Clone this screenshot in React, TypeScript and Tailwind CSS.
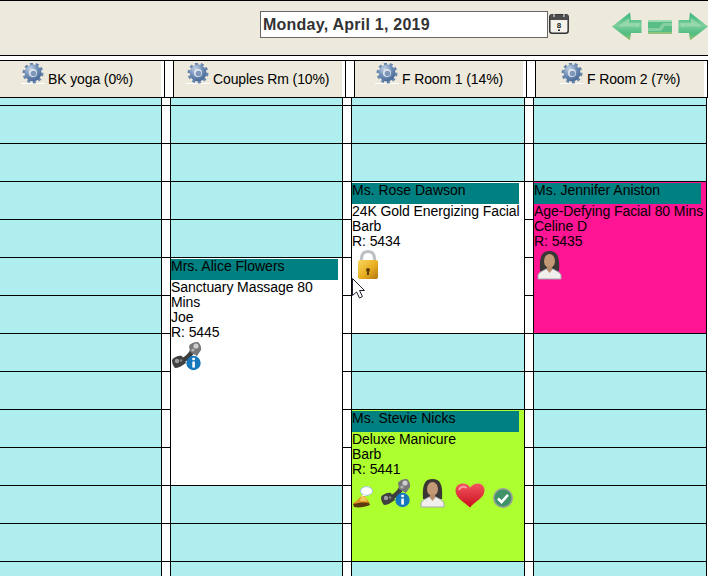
import type { ReactNode } from "react";

const font = { fontFamily: '"Liberation Sans", Arial, sans-serif' };

function Gear() {
  return (
    <svg width="24" height="21" viewBox="0 0 24 21">
      <defs>
        <radialGradient id="gearFill" cx="35%" cy="25%" r="85%">
          <stop offset="0%" stopColor="#c3d2e4" />
          <stop offset="50%" stopColor="#6f8fb8" />
          <stop offset="100%" stopColor="#3f5f8c" />
        </radialGradient>
      </defs>
      <rect x="0" y="20" width="24" height="1" fill="#ffffff" />
      <circle cx="12" cy="10" r="9" fill="none" stroke="#6a87ad" strokeWidth="3" strokeDasharray="3 2.6" />
      <circle cx="12" cy="10" r="8.4" fill="url(#gearFill)" />
      <circle cx="12" cy="10" r="4" fill="#dfe6ee" />
      <circle cx="12.5" cy="10.5" r="2.8" fill="#7f97b8" />
    </svg>
  );
}

function Calendar() {
  return (
    <svg width="20" height="20" viewBox="0 0 20 20" className="ml-[1px] mt-[13px]">
      <rect x="0.75" y="0.75" width="18.5" height="18.5" rx="2.5" fill="#f4f2ea" stroke="#333333" strokeWidth="1.5" />
      <rect x="1" y="1" width="18" height="5" fill="#4d4d4d" />
      <rect x="4" y="0" width="2" height="3" fill="#a3a3a3" />
      <rect x="14" y="0" width="2" height="3" fill="#a3a3a3" />
      <text x="10" y="14" textAnchor="middle" fontSize="8" fontWeight="700" fill="#222222" style={font}>8</text>
      <rect x="9" y="15.5" width="2" height="1.5" fill="#222222" />
    </svg>
  );
}

function Arrow({ flip = false }: { flip?: boolean }) {
  return (
    <svg width="30" height="29" viewBox="0 0 30 29" className={flip ? "-scale-x-100" : ""}>
      <defs>
        <linearGradient id="arrowFill" x1="0" y1="0" x2="0" y2="1">
          <stop offset="0%" stopColor="#35b47b" />
          <stop offset="45%" stopColor="#7ccf9b" />
          <stop offset="75%" stopColor="#52bd82" />
          <stop offset="100%" stopColor="#9cc46f" />
        </linearGradient>
      </defs>
      <path d="M0 14.5 L18 0.5 L19 8 L29.5 8 L29.5 21 L19 21 L18 28.5 Z" fill="url(#arrowFill)" />
      <path d="M6 14.5 L17 6 L17 11 L28 11 L27 15 C20 14 12 15 6 14.5 Z" fill="#a8dfb9" opacity="0.6" />
    </svg>
  );
}

function MiddleBar() {
  return (
    <svg width="24" height="14" viewBox="0 0 24 14">
      <rect width="24" height="14" fill="#58be85" />
      <rect x="0" y="0" width="24" height="2" fill="#9cdab3" />
      <path d="M0 8 L11 8 L15 3 L24 3 L24 6 L17 6 L13 11 L0 11 Z" fill="#86d0a0" />
      <rect x="0" y="12" width="24" height="2" fill="#8fc27a" />
    </svg>
  );
}

function Lock() {
  return (
    <svg width="22" height="30" viewBox="0 0 22 30" className="ml-[5px] mt-px">
      <defs>
        <linearGradient id="lockBody" x1="0" y1="0" x2="1" y2="1">
          <stop offset="0%" stopColor="#f9d85f" />
          <stop offset="55%" stopColor="#e8ad20" />
          <stop offset="100%" stopColor="#b3760f" />
        </linearGradient>
      </defs>
      <path d="M4.5 13 V9 C4.5 3.5 7 1.5 11 1.5 C15 1.5 17.5 3.5 17.5 9 V13" fill="none" stroke="#bcbfc3" strokeWidth="3" />
      <rect x="1" y="10" width="20" height="19" rx="2" fill="url(#lockBody)" />
      <circle cx="11" cy="20" r="2" fill="#5e3d08" />
      <rect x="10" y="20" width="2" height="5" fill="#5e3d08" />
    </svg>
  );
}

function PhoneInfo() {
  return (
    <svg width="31" height="31" viewBox="0 0 31 31">
      <path d="M8 22 C14 20 19 16 22 10" fill="none" stroke="#3d3d3d" strokeWidth="5" />
      <path d="M1 20 C3 17 8 15 11 16 L15 23 C11 26 7 28 4 28 C2 26 1 23 1 20 Z" fill="#414141" />
      <path d="M18 6 C20 3 24 1.5 27 2 C29.5 4 30.5 7 30 10 L26 16 L19 12 Z" fill="#777777" />
      <circle cx="25" cy="6" r="2.6" fill="#cfcfcf" />
      <circle cx="22" cy="10" r="1.6" fill="#b5b5b5" />
      <circle cx="6" cy="21" r="2.2" fill="#a0a0a0" />
      <circle cx="10" cy="20.5" r="1.2" fill="#8a8a8a" />
      <circle cx="22.5" cy="23" r="7.2" fill="#1677bd" />
      <rect x="21.3" y="21.6" width="2.6" height="6" fill="#ffffff" />
      <rect x="21.3" y="17.8" width="2.6" height="2.4" fill="#ffffff" />
    </svg>
  );
}

function Woman() {
  return (
    <svg width="25" height="30" viewBox="0 0 25 30">
      <path d="M3 21 C2 6 5 1 12.5 1 C20 1 23 6 22 21 Z" fill="#3a3735" />
      <path d="M1 29 L1 25 C2 22 6 21 9 19 L16 19 C19 21 23 22 24 25 L24 29 Z" fill="#f1efeb" stroke="#a4a8ae" />
      <ellipse cx="12.5" cy="11" rx="5.5" ry="7" fill="#c49a76" />
      <path d="M10 16 L15 16 L15 20 L12.5 23 L10 20 Z" fill="#b98e6c" />
    </svg>
  );
}

function Heart() {
  return (
    <svg width="30" height="25" viewBox="0 0 30 25">
      <defs>
        <linearGradient id="heartFill" x1="0" y1="0" x2="0" y2="1">
          <stop offset="0%" stopColor="#f3555f" />
          <stop offset="100%" stopColor="#c90f1c" />
        </linearGradient>
      </defs>
      <path d="M15 24.5 C9 19 0.5 15 0.5 7.5 C0.5 3 4 0.5 8 0.5 C11 0.5 13.5 2 15 4.5 C17.5 2 20 0.5 23 0.5 C27 0.5 29.5 3.5 29.5 7.5 C29.5 15 20 18 15 24.5 Z" fill="url(#heartFill)" />
      <path d="M4 7 C5 3.5 9 3 11.5 5" fill="none" stroke="#fb9aa0" strokeWidth="2" />
    </svg>
  );
}

function Check() {
  return (
    <svg width="20" height="20" viewBox="0 0 20 20">
      <circle cx="10" cy="10" r="9.2" fill="#3f9467" stroke="#9a9f9c" strokeWidth="1.6" />
      <path d="M5 10.5 L8.5 14 L15 6.8" fill="none" stroke="#ffffff" strokeWidth="2.6" />
    </svg>
  );
}

function BellNote() {
  return (
    <svg width="21" height="22" viewBox="0 0 21 22">
      <path d="M1 17 C5 15 8 11 11 8 L18 17 C13 19 7 21 3 21 Z" fill="#dc9a24" />
      <path d="M1 18 C6 17 11 16 17 17 L18 19 C13 21 7 22 2 21 Z" fill="#5c3a10" />
      <path d="M9 11 L13 11 L15 15 L8 15 Z" fill="#f3c65a" />
      <ellipse cx="14.5" cy="5" rx="6" ry="4.4" fill="#ffffff" stroke="#9dc1e6" />
      <path d="M11 8.5 L9 11 L14 9.5 Z" fill="#ffffff" />
    </svg>
  );
}

function Cursor() {
  return (
    <svg width="14" height="21" viewBox="0 0 14 21" className="absolute left-[352px] top-[278px]">
      <path d="M0.5 0.5 L12.5 12.5 L7.5 12.5 L10.5 18.5 L7.5 20 L4.5 14 L0.5 17.5 Z" fill="#ffffff" stroke="#202030" />
    </svg>
  );
}

function Slots({ n }: { n: number }) {
  return (
    <>
      {Array.from({ length: n }, (_, i) => (
        <div key={i} className="h-[38px] border-b border-black" />
      ))}
    </>
  );
}

function Column({ className, children }: { className: string; children?: ReactNode }) {
  return (
    <div className={`flex flex-col ${className}`}>
      <div className="h-[8px] border-b border-black" />
      {children}
      <div className="h-[14px]" />
    </div>
  );
}

function Booking({
  name,
  lines,
  height,
  color,
  children,
}: {
  name: string;
  lines: string[];
  height: string;
  color: string;
  children?: ReactNode;
}) {
  return (
    <div className={`${height} ${color} border-b border-black pt-px text-black`}>
      <div className="h-[21px] w-[167px] bg-[#008080]">{name}</div>
      {lines.map(l => (
        <div key={l} className="tracking-[-0.08px]">{l}</div>
      ))}
      {children}
    </div>
  );
}

const rooms = [
  { label: "BK yoga (0%)", outer: "w-[164px]", pad: "pl-[21px]" },
  { label: "Couples Rm (10%)", outer: "w-[172px] border-l border-black", pad: "pl-[12px]" },
  { label: "F Room 1 (14%)", outer: "w-[172px] border-l border-black", pad: "pl-[20px]" },
  { label: "F Room 2 (7%)", outer: "w-[173px] border-x border-black", pad: "pl-[24px]" },
];

export default function App() {
  return (
    <div className="relative h-[576px] w-[708px] overflow-hidden bg-white text-[14px] leading-[15px] text-black" style={font}>
      <div className="flex h-[56px] border-y border-black bg-[#ede9dc]">
        <div className="ml-[260px] mt-[10px] h-[27px] w-[289px] border border-[#666666] bg-white pl-[2px] text-[16px] font-bold leading-[25px] tracking-[0.24px] text-[#333333]">
          Monday, April 1, 2019
        </div>
        <Calendar />
        <div className="ml-[43px] mt-[11px] flex h-[29px] items-center gap-[6px]">
          <Arrow />
          <MiddleBar />
          <Arrow flip />
        </div>
      </div>

      <div className="mt-[4px] flex h-[38px] border-y border-black">
        {rooms.map((r, i) => (
          <div key={r.label} className="contents">
            <div className={`${r.outer} pr-[3px]`}>
              <div className={`flex h-full items-start gap-[3px] bg-[#ede9dc] pt-[2px] ${r.pad}`}>
                <Gear />
                <span className="mt-[9px] whitespace-nowrap tracking-[-0.12px]">{r.label}</span>
              </div>
            </div>
            {i < 3 && <div className="w-[9px] border-l border-black" />}
          </div>
        ))}
      </div>

      <div className="flex bg-white">
        <Column className="w-[162px] border-r border-black bg-[#afeeee]">
          <Slots n={12} />
        </Column>
        <Column className="w-[8px]">
          <Slots n={12} />
        </Column>
        <Column className="w-[173px] border-x border-black bg-[#afeeee]">
          <Slots n={4} />
          <Booking
            name="Mrs. Alice Flowers"
            lines={["Sanctuary Massage 80 Mins", "Joe", "R: 5445"]}
            height="h-[228px]"
            color="bg-white"
          >
            <PhoneInfo />
          </Booking>
          <Slots n={2} />
        </Column>
        <Column className="w-[8px]">
          <Slots n={12} />
        </Column>
        <Column className="w-[174px] border-x border-black bg-[#afeeee]">
          <Slots n={2} />
          <Booking
            name="Ms. Rose Dawson"
            lines={["24K Gold Energizing Facial", "Barb", "R: 5434"]}
            height="h-[152px]"
            color="bg-white"
          >
            <Lock />
          </Booking>
          <Slots n={2} />
          <Booking
            name="Ms. Stevie Nicks"
            lines={["Deluxe Manicure", "Barb", "R: 5441"]}
            height="h-[152px]"
            color="bg-[#adff2f]"
          >
            <div className="flex h-[31px] items-end">
              <BellNote />
              <div className="ml-[7px]">
                <PhoneInfo />
              </div>
              <div className="ml-[9px]">
                <Woman />
              </div>
              <div className="ml-[10px]">
                <Heart />
              </div>
              <div className="ml-[8px]">
                <Check />
              </div>
            </div>
          </Booking>
        </Column>
        <Column className="w-[8px]">
          <Slots n={12} />
        </Column>
        <Column className="w-[174px] border-x border-black bg-[#afeeee]">
          <Slots n={2} />
          <Booking
            name="Ms. Jennifer Aniston"
            lines={["Age-Defying Facial 80 Mins", "Celine D", "R: 5435"]}
            height="h-[152px]"
            color="bg-[#ff1493]"
          >
            <div className="ml-[3px] mt-px">
              <Woman />
            </div>
          </Booking>
          <Slots n={6} />
        </Column>
      </div>

      <Cursor />
    </div>
  );
}
